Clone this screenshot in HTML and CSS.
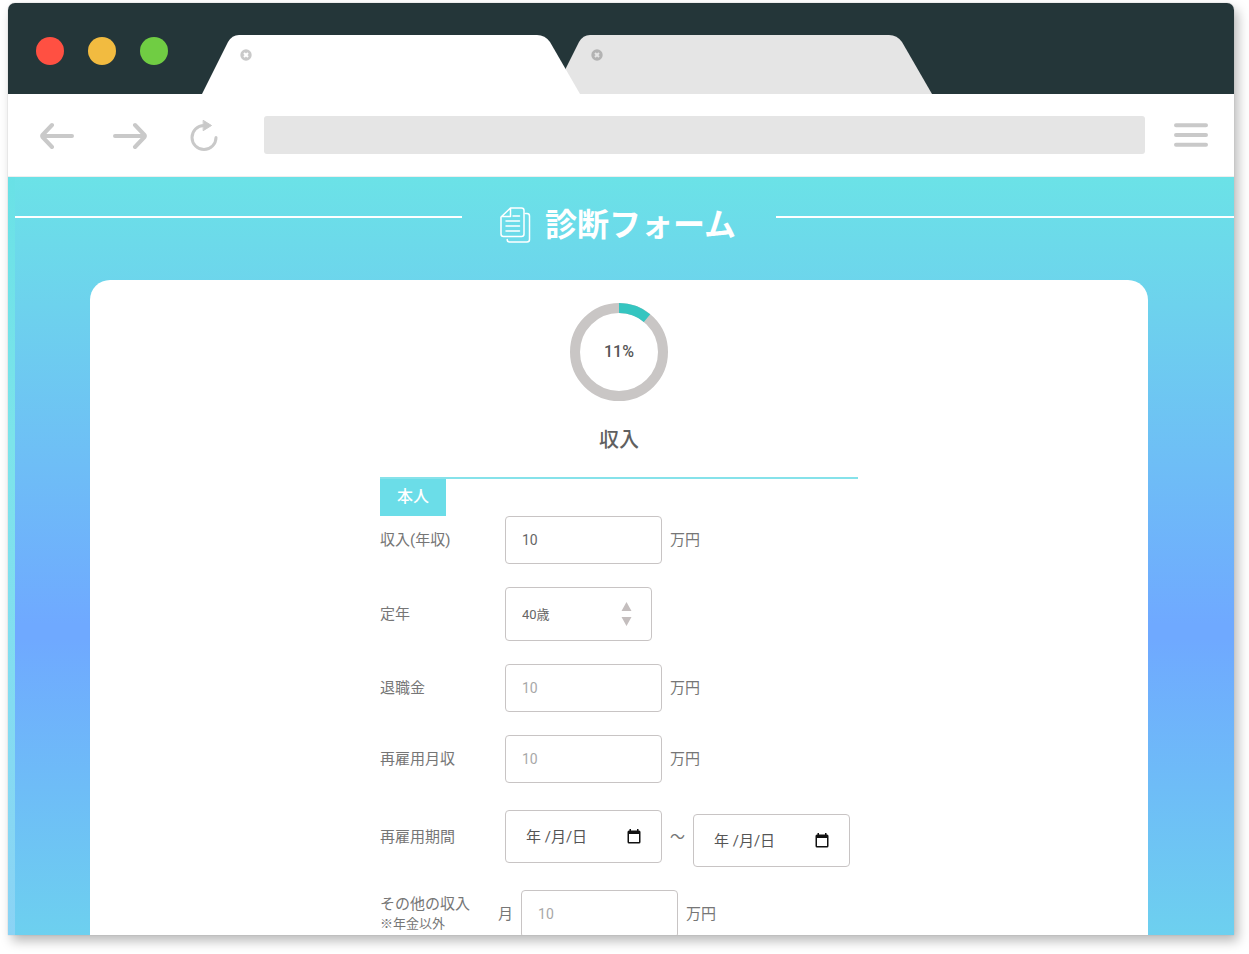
FILE: index.html
```html
<!DOCTYPE html>
<html lang="ja">
<head>
<meta charset="utf-8">
<meta name="viewport" content="width=device-width, initial-scale=1">
<title>診断フォーム</title>
<link rel="stylesheet" href="styles.css">
</head>
<body>
<div class="window">
  <header class="tabbar">
    <div class="lights">
      <span class="light light-red"></span>
      <span class="light light-yellow"></span>
      <span class="light light-green"></span>
    </div>
    <div class="tabs">
      <div class="tab tab-active">
        <svg class="tab-shape" viewBox="0 0 379 59" aria-hidden="true"><path d="M0 59 26 7Q30 0 37 0H335Q343 0 348 7L378 59Z"/></svg>
        <button class="tab-close" type="button" aria-label="タブを閉じる"><svg viewBox="0 0 12 12"><circle cx="6" cy="6" r="5.7"/><path d="M4 4 8 8M8 4 4 8"/></svg></button>
      </div>
      <div class="tab tab-idle">
        <svg class="tab-shape" viewBox="0 0 379 59" aria-hidden="true"><path d="M0 59 26 7Q30 0 37 0H336Q344 0 349 7L379 59Z"/></svg>
        <button class="tab-close" type="button" aria-label="タブを閉じる"><svg viewBox="0 0 12 12"><circle cx="6" cy="6" r="5.7"/><path d="M4 4 8 8M8 4 4 8"/></svg></button>
      </div>
    </div>
  </header>

  <nav class="toolbar">
    <div class="history">
      <button class="tool" type="button" aria-label="戻る"><svg width="34" height="28" viewBox="0 0 34 28"><path d="M32 15H3M12 4 2.500 14Q1.800 15 2.500 16L12 26"/></svg></button>
      <button class="tool" type="button" aria-label="進む"><svg width="34" height="28" viewBox="0 0 34 28"><path d="M2 15H31M22 4 31.500 14Q32.200 15 31.500 16L22 26"/></svg></button>
      <button class="tool" type="button" aria-label="再読み込み"><svg width="32" height="32" viewBox="-4 0 32 32"><path class="reload-arc" d="M14 6.500A12 12 0 1 0 26 18.500"/><path class="reload-tip" d="M13.500 1.500 21.500 6.500 13.500 11.500Z"/></svg></button>
    </div>
    <input class="address" type="text" aria-label="アドレス">
    <button class="tool" type="button" aria-label="メニュー"><svg width="34" height="24" viewBox="0 0 34 24"><path class="menu-bars" d="M2 2.300H32M2 12H32M2 21.700H32"/></svg></button>
  </nav>

  <main class="page">
    <div class="panel">
      <div class="title-row">
        <span class="rule rule-left"></span>
        <h1 class="title">
          <svg width="31" height="36" viewBox="0 0 31 36" aria-hidden="true"><path d="M10.500 1H21.500Q24 1 24 3.500V27Q24 29.500 21.500 29.500H3.500Q1 29.500 1 27V10ZM10.500 1.500V9.500H1.500M13 9H19.500M6 14H19.500M6 19H19.500M6 24H19.500M25.500 6.500H27Q29.500 6.500 29.500 9V32.500Q29.500 35 27 35H9.500Q7.200 35 7.200 32.500"/></svg>
          <span>診断フォーム</span>
        </h1>
        <span class="rule rule-right"></span>
      </div>

      <form class="card">
        <div class="progress">
          <svg class="ring" viewBox="0 0 98 98" aria-hidden="true">
            <circle class="ring-track" cx="49" cy="49" r="44"/>
            <circle class="ring-value" cx="49" cy="49" r="44" pathLength="100"/>
          </svg>
          <span class="percent">11%</span>
        </div>
        <h2 class="section-title">収入</h2>

        <div class="fields">
          <h3 class="person">本人</h3>

          <div class="row">
            <label class="label" for="income">収入(年収)</label>
            <input class="box" id="income" type="text" value="10">
            <span>万円</span>
          </div>
          <div class="row">
            <label class="label" for="retire">定年</label>
            <div class="select-wrap">
              <select class="box select" id="retire"><option>40歳</option></select>
              <svg class="select-arrows" viewBox="0 0 11 24" aria-hidden="true"><path d="M5.500 0 10.500 9H.5ZM5.500 24 10.500 15H.5Z"/></svg>
            </div>
          </div>
          <div class="row">
            <label class="label" for="allowance">退職金</label>
            <input class="box" id="allowance" type="text" placeholder="10">
            <span>万円</span>
          </div>
          <div class="row">
            <label class="label" for="rehire">再雇用月収</label>
            <input class="box" id="rehire" type="text" placeholder="10">
            <span>万円</span>
          </div>
          <div class="row">
            <label class="label" for="from">再雇用期間</label>
            <div class="box date">
              <input class="date-input" id="from" type="text" placeholder="年 /月/日">
              <button class="calendar" type="button" aria-label="開始日を選択"><svg viewBox="0 0 14 15"><path d="M2.500 0H4V1.500H10V0H11.500V1.500H12Q13.500 1.500 13.500 3V13Q13.500 14.500 12 14.500H2Q.5 14.500 .5 13V3Q.5 1.500 2 1.500H2.500ZM2 5V13H12V5Z"/></svg></button>
            </div>
            <span>〜</span>
            <div class="box date date-end">
              <input class="date-input" type="text" placeholder="年 /月/日" aria-label="再雇用期間 終了日">
              <button class="calendar" type="button" aria-label="終了日を選択"><svg viewBox="0 0 14 15"><path d="M2.500 0H4V1.500H10V0H11.500V1.500H12Q13.500 1.500 13.500 3V13Q13.500 14.500 12 14.500H2Q.5 14.500 .5 13V3Q.5 1.500 2 1.500H2.500ZM2 5V13H12V5Z"/></svg></button>
            </div>
          </div>
          <div class="row">
            <label class="label label-other" for="other">その他の収入<small class="note">※年金以外</small></label>
            <span>月</span>
            <input class="box" id="other" type="text" placeholder="10">
            <span>万円</span>
          </div>
        </div>
      </form>
    </div>
  </main>
</div>
</body>
</html>
```
FILE: styles.css
```css
* {
  box-sizing: border-box;
}

body {
  margin: 0;
  height: 100vh;
  padding: 3px 15px 19px 8px;
  background: #fff;
  color: #767676;
  font-family: Roboto, "Noto Sans CJK JP", sans-serif;
  font-size: 15px;
  line-height: 20px;
}

button {
  padding: 0;
  border: 0;
  background: none;
  cursor: pointer;
}

svg {
  display: block;
}

.window {
  display: flex;
  flex-direction: column;
  height: 100%;
  overflow: hidden;
  border-radius: 7px 7px 0 0;
  background: #fff;
  box-shadow: 0 0 1px #999, 4px 6px 12px rgba(0, 0, 0, 0.28);
}

.tabbar {
  display: flex;
  flex: none;
  align-items: flex-end;
  gap: 34px;
  padding: 32px 28px 0;
  background: #243639;
}

.lights {
  display: flex;
  gap: 24px;
  padding-bottom: 29px;
}

.light {
  width: 28px;
  height: 28px;
  border-radius: 50%;
}

.light-red {
  background: #ff5042;
}

.light-yellow {
  background: #f2bb40;
}

.light-green {
  background: #70cd43;
}

.tabs {
  display: flex;
}

.tab {
  position: relative;
  width: 379px;
  height: 59px;
  padding: 14px 38px;
}

.tab-active {
  z-index: 1;
  fill: #fff;
}

.tab-idle {
  margin-left: -28px;
  fill: #e5e5e5;
}

.tab-shape {
  position: absolute;
  inset: 0;
}

.tab-close {
  display: block;
  position: relative;
  width: 12px;
  height: 12px;
}

.tab-close svg {
  fill: #c9c9c9;
  stroke: #fff;
  stroke-width: 2;
}

.tab-close circle {
  stroke: none;
}

.tab-idle .tab-close svg {
  fill: #b3b3b3;
  stroke: #e5e5e5;
}

.toolbar {
  display: flex;
  flex: none;
  align-items: center;
  gap: 29px;
  height: 83px;
  padding: 0 26px 0 32px;
  border-bottom: 1px solid #eee;
  background: #fff;
}

.history {
  display: flex;
  align-items: center;
  gap: 39px;
  margin-right: 17px;
}

.tool svg {
  fill: none;
  stroke: #c9c9c9;
  stroke-width: 4;
  stroke-linecap: round;
  stroke-linejoin: round;
}

.tool .reload-arc {
  stroke-width: 3;
}

.tool .reload-tip {
  fill: #c9c9c9;
  stroke-width: 1;
}

.address {
  flex: 1;
  min-width: 0;
  height: 38px;
  border: 0;
  border-radius: 3px;
  background: #e5e5e5;
}

.page {
  display: flex;
  flex: 1;
  min-height: 0;
  padding-left: 7px;
  background: linear-gradient(#69e1e6, #7ce4ea 35%, #83dcf1 70%, #8bd3f5);
}

.panel {
  display: flex;
  flex: 1;
  flex-direction: column;
  min-width: 0;
  overflow: hidden;
  background: linear-gradient(#6be2e7, #6dd2ed 17%, #6fa9ff 59%, #6fa9ff 61%, #6dd0ef);
}

.title-row {
  display: flex;
  flex: none;
  gap: 38px;
  padding: 28px 0 35px;
}

.rule {
  height: 2px;
  margin-top: 11px;
  background: #fff;
}

.rule-left {
  flex: 446;
}

.rule-right {
  flex: 457;
}

.title {
  display: flex;
  align-items: center;
  gap: 14px;
  margin: 0;
  padding-right: 2px;
  color: #fff;
  font-size: 32px;
  font-weight: 700;
  line-height: 40px;
}

.title svg {
  fill: none;
  stroke: #fff;
  stroke-width: 1.5;
  stroke-linecap: round;
  stroke-linejoin: round;
}

.card {
  display: flex;
  flex: 1 0 auto;
  flex-direction: column;
  align-items: center;
  margin: 0 86px 0 75px;
  padding-top: 23px;
  border-radius: 20px 20px 0 0;
  background: #fff;
}

.progress {
  display: grid;
  place-items: center;
}

.ring,
.percent {
  grid-area: 1 / 1;
}

.ring {
  width: 98px;
  height: 98px;
  fill: none;
  stroke-width: 10;
  transform: rotate(-90deg);
}

.ring-track {
  stroke: #c9c6c5;
}

.ring-value {
  stroke: #35c5c0;
  stroke-dasharray: 11 89;
}

.percent {
  color: #555;
  font-size: 16px;
  font-weight: 500;
  line-height: 22px;
}

.section-title {
  margin: 25px 0 23px;
  color: #606060;
  font-size: 20px;
  font-weight: 500;
  line-height: 28px;
}

.fields {
  display: flex;
  flex-direction: column;
  gap: 23px;
  width: 478px;
  border-top: 2px solid #86e2ea;
}

.person {
  align-self: flex-start;
  margin: 0 0 -23px;
  padding: 7px 17px 8px;
  background: #6bdde8;
  color: #fff;
  font-size: 16px;
  font-weight: 500;
  line-height: 22px;
}

.row {
  display: flex;
  align-items: center;
  gap: 8px;
  white-space: nowrap;
}

.label {
  width: 117px;
}

.label-other {
  width: 110px;
}

.note {
  display: block;
  font-size: 13px;
}

.box {
  width: 157px;
  height: 48px;
  padding: 0 16px;
  border: 1px solid #c8c4c4;
  border-radius: 4px;
  background: #fff;
  color: #666;
  font-family: inherit;
  font-size: 14px;
}

.box::placeholder {
  color: #a8a8a8;
}

.select-wrap {
  position: relative;
}

.select {
  display: block;
  width: 147px;
  height: 54px;
  appearance: none;
  font-size: 13px;
}

.select-arrows {
  position: absolute;
  top: 15px;
  right: 20px;
  width: 11px;
  height: 24px;
  fill: #c4bebe;
  pointer-events: none;
}

.date {
  display: flex;
  align-items: center;
  justify-content: space-between;
  height: 53px;
  padding: 0 20px;
}

.date-end {
  margin-top: 8px;
}

.date-input {
  width: 80px;
  padding: 0;
  border: 0;
  background: none;
  font-family: inherit;
  font-size: 15px;
}

.date-input::placeholder {
  color: #555;
}

.calendar svg {
  width: 14px;
  height: 15px;
  fill: #111;
}
```
